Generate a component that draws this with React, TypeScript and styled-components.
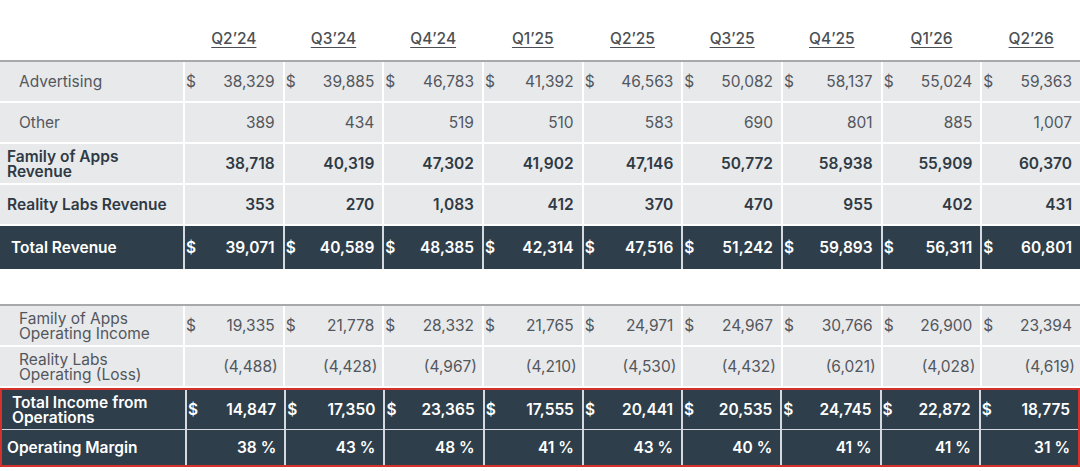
import React from 'react';
import styled, { createGlobalStyle, css } from 'styled-components';

const GlobalStyle = createGlobalStyle`
  html, body {
    margin: 0;
    padding: 0;
    background: #ffffff;
  }
  body {
    font-family: Inter, "Noto Sans", "Liberation Sans", sans-serif;
    -webkit-font-smoothing: antialiased;
  }
`;

const COLS = '183px repeat(9, 1fr)';

const Page = styled.div`
  width: 1080px;
  height: 471px;
  overflow: hidden;
  background: #ffffff;
`;

const HeaderRow = styled.div`
  display: grid;
  grid-template-columns: ${COLS};
  column-gap: 2px;
  height: 60px;
  align-items: end;
  border-bottom: 2px solid #a7a9ab;
`;

const HeaderCell = styled.div`
  text-align: center;
  padding-bottom: 12px;
  font-size: 15.5px;
  font-weight: 500;
  color: #4b4f54;
  text-decoration: underline;
  text-underline-offset: 3px;
  text-decoration-thickness: 1px;
`;

const Section = styled.div<{ $gapTop?: number }>`
  display: flex;
  flex-direction: column;
  gap: 2px;
  ${(p) =>
    p.$gapTop !== undefined &&
    css`
      margin-top: ${p.$gapTop}px;
      border-top: 2px solid #a7a9ab;
    `}
`;

const Row = styled.div<{ $h: number; $dark?: boolean }>`
  display: grid;
  grid-template-columns: ${COLS};
  column-gap: 2px;
  height: ${(p) => p.$h}px;
  background: ${(p) => (p.$dark ? '#d4dadf' : '#ffffff')};
`;

const Highlight = styled.div`
  display: flex;
  flex-direction: column;
  gap: 1px;
  border: 2px solid #d6322c;
  background: #d4dadf;
`;

type Tone = 'plain' | 'bold' | 'dark';

const toneStyles = (tone: Tone) => {
  if (tone === 'plain')
    return css`
      background: #e8e9eb;
      color: #53575d;
      font-weight: 400;
    `;
  if (tone === 'bold')
    return css`
      background: #e8e9eb;
      color: #2f3a44;
      font-weight: 600;
    `;
  return css`
    background: #2e3e4a;
    color: #ffffff;
    font-weight: 600;
  `;
};

const LabelCell = styled.div<{ $tone: Tone; $indent: number }>`
  display: flex;
  align-items: center;
  padding-left: ${(p) => p.$indent}px;
  font-size: 15.5px;
  line-height: 15px;
  ${(p) => toneStyles(p.$tone)}
`;

const ValueCell = styled.div<{ $tone: Tone; $neg?: boolean }>`
  display: flex;
  align-items: center;
  justify-content: space-between;
  padding: 0 ${(p) => (p.$neg ? 5 : 8)}px 0 1px;
  font-size: 15.5px;
  white-space: nowrap;
  ${(p) => toneStyles(p.$tone)}
`;

const Dollar = styled.span``;
const Amount = styled.span`
  margin-left: auto;
`;

const quarters = ['Q2’24', 'Q3’24', 'Q4’24', 'Q1’25', 'Q2’25', 'Q3’25', 'Q4’25', 'Q1’26', 'Q2’26'];

type RowData = {
  label: string;
  values: string[];
  tone: Tone;
  indent: number;
  wrap: number;
  dollar?: boolean;
  height: number;
};

const revenue: RowData[] = [
  {
    label: 'Advertising',
    values: ['38,329', '39,885', '46,783', '41,392', '46,563', '50,082', '58,137', '55,024', '59,363'],
    tone: 'plain',
    indent: 19,
    wrap: 180,
    dollar: true,
    height: 39,
  },
  {
    label: 'Other',
    values: ['389', '434', '519', '510', '583', '690', '801', '885', '1,007'],
    tone: 'plain',
    indent: 19,
    wrap: 180,
    height: 39,
  },
  {
    label: 'Family of Apps Revenue',
    values: ['38,718', '40,319', '47,302', '41,902', '47,146', '50,772', '58,938', '55,909', '60,370'],
    tone: 'bold',
    indent: 7,
    wrap: 125,
    height: 39,
  },
  {
    label: 'Reality Labs Revenue',
    values: ['353', '270', '1,083', '412', '370', '470', '955', '402', '431'],
    tone: 'bold',
    indent: 7,
    wrap: 180,
    height: 39,
  },
];

const totalRevenue: RowData = {
  label: 'Total Revenue',
  values: ['39,071', '40,589', '48,385', '42,314', '47,516', '51,242', '59,893', '56,311', '60,801'],
  tone: 'dark',
  indent: 11,
  wrap: 180,
  dollar: true,
  height: 43,
};

const operating: RowData[] = [
  {
    label: 'Family of Apps Operating Income',
    values: ['19,335', '21,778', '28,332', '21,765', '24,971', '24,967', '30,766', '26,900', '23,394'],
    tone: 'plain',
    indent: 19,
    wrap: 145,
    dollar: true,
    height: 39,
  },
  {
    label: 'Reality Labs Operating (Loss)',
    values: ['(4,488)', '(4,428)', '(4,967)', '(4,210)', '(4,530)', '(4,432)', '(6,021)', '(4,028)', '(4,619)'],
    tone: 'plain',
    indent: 19,
    wrap: 145,
    height: 39,
  },
];

const highlighted: RowData[] = [
  {
    label: 'Total Income from Operations',
    values: ['14,847', '17,350', '23,365', '17,555', '20,441', '20,535', '24,745', '22,872', '18,775'],
    tone: 'dark',
    indent: 10,
    wrap: 150,
    dollar: true,
    height: 39,
  },
  {
    label: 'Operating Margin',
    values: ['38 %', '43 %', '48 %', '41 %', '43 %', '40 %', '41 %', '41 %', '31 %'],
    tone: 'dark',
    indent: 5,
    wrap: 180,
    height: 35,
  },
];

const LabelText = styled.span<{ $wrap: number }>`
  max-width: ${(p) => p.$wrap}px;
`;

const DataRow: React.FC<{ row: RowData }> = ({ row }) => (
  <Row $h={row.height} $dark={row.tone === 'dark'}>
    <LabelCell $tone={row.tone} $indent={row.indent}>
      <LabelText $wrap={row.wrap}>{row.label}</LabelText>
    </LabelCell>
    {row.values.map((v, i) => (
      <ValueCell key={i} $tone={row.tone} $neg={v.startsWith('(')}>
        {row.dollar && <Dollar>$</Dollar>}
        <Amount>{v}</Amount>
      </ValueCell>
    ))}
  </Row>
);

export default function App() {
  return (
    <Page>
      <GlobalStyle />
      <HeaderRow>
        <div />
        {quarters.map((q) => (
          <HeaderCell key={q}>{q}</HeaderCell>
        ))}
      </HeaderRow>
      <Section>
        {revenue.map((r) => (
          <DataRow key={r.label} row={r} />
        ))}
        <DataRow row={totalRevenue} />
      </Section>
      <Section $gapTop={35}>
        {operating.map((r) => (
          <DataRow key={r.label} row={r} />
        ))}
        <Highlight>
          {highlighted.map((r) => (
            <DataRow key={r.label} row={r} />
          ))}
        </Highlight>
      </Section>
    </Page>
  );
}
